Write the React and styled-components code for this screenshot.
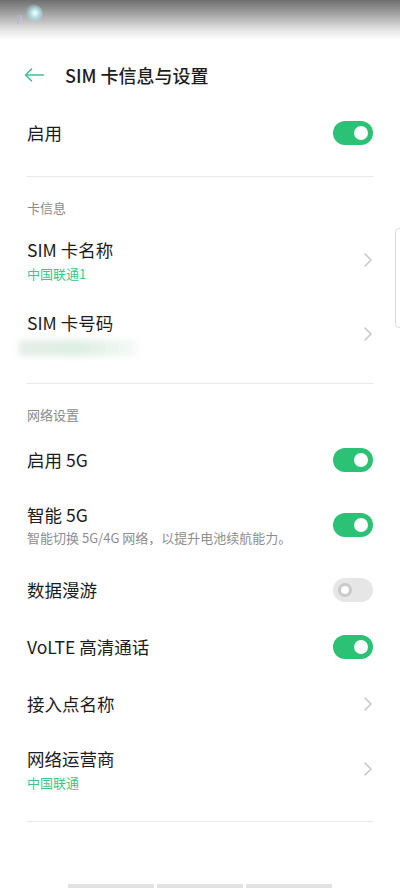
import React from "react";
import styled, { createGlobalStyle } from "styled-components";

const Global = createGlobalStyle`
  html, body { margin: 0; padding: 0; background: #ffffff; }
  body { font-family: "Noto Sans CJK SC", "Noto Sans", sans-serif; -webkit-font-smoothing: antialiased; }
  * { box-sizing: border-box; }
`;

const GREEN = "#2bc275";
const SUB_GREEN = "#3cc68a";

const Page = styled.div`
  position: relative;
  width: 400px;
  height: 888px;
  overflow: hidden;
  display: flex;
  flex-direction: column;
  background: #fff;
`;

const StatusBar = styled.div`
  height: 40px;
  flex-shrink: 0;
  background: linear-gradient(to bottom, #6f6f6f 0%, #a4a4a4 35%, #e4e4e4 75%, #ffffff 100%);
  display: flex;
  align-items: flex-start;
  padding: 3px 0 0 14px;
`;

const Header = styled.div`
  height: 64px;
  flex-shrink: 0;
  display: flex;
  align-items: flex-start;
  padding: 23px 0 0 24px;
  gap: 20px;
`;

const BackButton = styled.div`
  width: 21px;
  height: 24px;
  display: flex;
  align-items: center;
`;

const Title = styled.div`
  font-size: 18px;
  line-height: 24px;
  font-weight: 500;
  color: #1d1d1d;
`;

const Row = styled.div`
  min-height: ${(p) => (p.$tall ? 73 : 57)}px;
  display: flex;
  align-items: center;
  justify-content: space-between;
  padding: 14.5px 27px;
`;

const RowText = styled.div`
  display: flex;
  flex-direction: column;
`;

const RowTitle = styled.div`
  font-size: 17.5px;
  line-height: 24px;
  color: #1c1c1c;
  white-space: nowrap;
`;

const RowSub = styled.div`
  margin-top: ${(p) => (p.$desc ? 2 : 4)}px;
  font-size: ${(p) => (p.$desc ? 13 : 13)}px;
  line-height: ${(p) => (p.$desc ? 18 : 16)}px;
  color: ${(p) => (p.$desc ? "#8e8e8e" : SUB_GREEN)};
  white-space: nowrap;
`;

const Blurred = styled.div`
  margin: 5px 0 0 -8px;
  width: 118px;
  height: 16px;
  border-radius: 4px;
  background: linear-gradient(to right, rgba(205, 218, 208, 0.5), rgba(185, 222, 198, 0.5), rgba(225, 238, 228, 0.3));
  filter: blur(3px);
`;

const Divider = styled.div`
  height: 1px;
  margin: ${(p) => p.$mt ?? 14.5}px 27px 0;
  background: #e9e9e9;
  flex-shrink: 0;
`;

const SectionHeader = styled.div`
  padding: 22px 27px 0;
  margin-bottom: ${(p) => p.$mb ?? 7}px;
  font-size: 13px;
  line-height: 18px;
  color: #8a8a8a;
`;

const Track = styled.div`
  width: 40px;
  height: 24px;
  border-radius: 12px;
  flex-shrink: 0;
  background: ${(p) => (p.$on ? GREEN : "#e6e6e6")};
  display: flex;
  align-items: center;
  justify-content: ${(p) => (p.$on ? "flex-end" : "flex-start")};
  padding: 0 5px;
`;

const Knob = styled.div`
  width: 14px;
  height: 14px;
  border-radius: 50%;
  background: #fff;
  border: ${(p) => (p.$on ? "none" : "3px solid #c9c9c9")};
`;

const Spacer = styled.div`
  flex: 1;
`;

const NavBars = styled.div`
  display: flex;
  justify-content: center;
  gap: 3px;
  height: 4px;
  flex-shrink: 0;
`;

const NavBar = styled.div`
  width: 86px;
  height: 4px;
  background: #e2e2e2;
  border-radius: 1px 1px 0 0;
`;

const ScrollHint = styled.div`
  position: absolute;
  right: -4px;
  top: 228px;
  width: 9px;
  height: 100px;
  border: 1px solid #dcdcdc;
  border-radius: 4px;
  background: #fff;
`;

const Toggle = ({ on }) => (
  <Track $on={on}>
    <Knob $on={on} />
  </Track>
);

const Chevron = () => (
  <svg width="10" height="16" viewBox="0 0 10 16" fill="none">
    <path d="M2 2 L8 8 L2 14" stroke="#c6c6c6" strokeWidth="1.5" strokeLinecap="round" strokeLinejoin="round" />
  </svg>
);

const BackArrow = () => (
  <svg width="21" height="14" viewBox="0 0 21 14" fill="none">
    <path d="M1.5 7 H19.5 M1.5 7 L7.5 1.2 M1.5 7 L7.5 12.8" stroke="#46c08e" strokeWidth="1.6" strokeLinecap="round" strokeLinejoin="round" />
  </svg>
);

const Sparkle = () => (
  <svg width="30" height="26" viewBox="0 0 30 26">
    <defs>
      <radialGradient id="glow" cx="0.6" cy="0.45" r="0.5">
        <stop offset="0" stopColor="#ffffff" stopOpacity="1" />
        <stop offset="0.35" stopColor="#bfeff5" stopOpacity="0.9" />
        <stop offset="1" stopColor="#9ad7e6" stopOpacity="0" />
      </radialGradient>
    </defs>
    <rect x="3" y="12" width="2" height="9" fill="#b7b4e2" opacity="0.7" />
    <rect x="6" y="12" width="2" height="9" fill="#c4c2ea" opacity="0.6" />
    <circle cx="19" cy="11" r="10" fill="url(#glow)" />
  </svg>
);

export default function App() {
  return (
    <>
      <Global />
      <Page>
        <StatusBar>
          <Sparkle />
        </StatusBar>
        <Header>
          <BackButton>
            <BackArrow />
          </BackButton>
          <Title>SIM 卡信息与设置</Title>
        </Header>

        <Row>
          <RowTitle>启用</RowTitle>
          <Toggle on />
        </Row>
        <Divider $mt={14.5} />

        <SectionHeader $mb={7}>卡信息</SectionHeader>
        <Row $tall>
          <RowText>
            <RowTitle>SIM 卡名称</RowTitle>
            <RowSub>中国联通1</RowSub>
          </RowText>
          <Chevron />
        </Row>
        <Row $tall>
          <RowText>
            <RowTitle>SIM 卡号码</RowTitle>
            <Blurred />
          </RowText>
          <Chevron />
        </Row>
        <Divider $mt={12} />

        <SectionHeader $mb={8}>网络设置</SectionHeader>
        <Row>
          <RowTitle>启用 5G</RowTitle>
          <Toggle on />
        </Row>
        <Row $tall>
          <RowText>
            <RowTitle>智能 5G</RowTitle>
            <RowSub $desc>智能切换 5G/4G 网络，以提升电池续航能力。</RowSub>
          </RowText>
          <Toggle on />
        </Row>
        <Row>
          <RowTitle>数据漫游</RowTitle>
          <Toggle />
        </Row>
        <Row>
          <RowTitle>VoLTE 高清通话</RowTitle>
          <Toggle on />
        </Row>
        <Row>
          <RowTitle>接入点名称</RowTitle>
          <Chevron />
        </Row>
        <Row $tall>
          <RowText>
            <RowTitle>网络运营商</RowTitle>
            <RowSub>中国联通</RowSub>
          </RowText>
          <Chevron />
        </Row>
        <Divider $mt={15.5} />

        <Spacer />
        <NavBars>
          <NavBar />
          <NavBar />
          <NavBar />
        </NavBars>
        <ScrollHint />
      </Page>
    </>
  );
}
